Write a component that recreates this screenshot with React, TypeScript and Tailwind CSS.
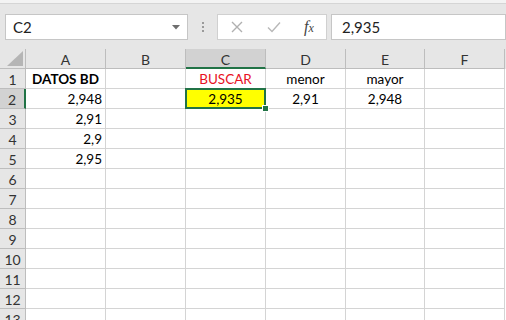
import React from 'react';

const cols = ['A', 'B', 'C', 'D', 'E', 'F'];
const widths = ['w-[80px]', 'w-[80px]', 'w-[80px]', 'w-[80px]', 'w-[79px]', 'w-[80px]'];

type Cell = { text: string; align?: 'left' | 'center' | 'right'; bold?: boolean; red?: boolean };

const data: Record<string, Cell> = {
  A1: { text: 'DATOS BD', align: 'center', bold: true },
  C1: { text: 'BUSCAR', align: 'center', red: true },
  D1: { text: 'menor', align: 'center' },
  E1: { text: 'mayor', align: 'center' },
  A2: { text: '2,948', align: 'right' },
  C2: { text: '2,935', align: 'center' },
  D2: { text: '2,91', align: 'center' },
  E2: { text: '2,948', align: 'center' },
  A3: { text: '2,91', align: 'right' },
  A4: { text: '2,9', align: 'right' },
  A5: { text: '2,95', align: 'right' },
};

const rows = Array.from({ length: 13 }, (_, i) => i + 1);

const App: React.FC = () => {
  return (
    <div className="w-[506px] h-[320px] overflow-hidden bg-white text-[13.5px] text-black" style={{ fontFamily: 'Lato, "Liberation Sans", sans-serif' }}>
      {/* ribbon remnant */}
      <div className="h-[4px] bg-[#f3f3f3] border-b border-[#d5d5d5]" />

      {/* formula bar */}
      <div className="h-[45px] bg-[#e6e6e6] flex items-start pt-[10px]">
        <div className="ml-[5px] w-[183px] h-[26px] bg-white border border-[#c6c6c6] flex items-center pl-[7px] pr-[7px] text-[15px] text-[#222]">
          <span className="flex-1 pt-[1px]">C2</span>
          <svg width="8" height="5" viewBox="0 0 8 5"><path d="M0 0h8L4 4.5z" fill="#6e6e6e" /></svg>
        </div>
        <div className="w-[29px] h-[26px] flex flex-col items-center justify-center gap-[2px]">
          <span className="w-[2px] h-[2px] bg-[#9a9a9a]" />
          <span className="w-[2px] h-[2px] bg-[#9a9a9a]" />
          <span className="w-[2px] h-[2px] bg-[#9a9a9a]" />
        </div>
        <div className="w-[110px] h-[26px] bg-white border border-[#d0d0d0] flex items-center">
          <div className="w-[38px] flex justify-center">
            <svg width="12" height="12" viewBox="0 0 12 12"><path d="M1 1l10 10M11 1L1 11" stroke="#b0b0b0" strokeWidth="1.4" /></svg>
          </div>
          <div className="w-[36px] flex justify-center">
            <svg width="14" height="12" viewBox="0 0 14 12"><path d="M1 6.5l4 4L13 1.5" stroke="#b8b8b8" strokeWidth="1.4" fill="none" /></svg>
          </div>
          <div className="w-[34px] flex justify-center text-[#444] italic text-[16px]" style={{ fontFamily: '"Liberation Serif", serif' }}>
            <span>f</span><span className="text-[12px] mt-[4px]">x</span>
          </div>
        </div>
        <div className="ml-[4px] flex-1 h-[26px] bg-white border border-[#c6c6c6] flex items-center pl-[10px] pt-[1px] text-[15px] text-[#222]">
          2,935
        </div>
      </div>

      {/* grid */}
      <div className="flex flex-col">
        <div className="flex h-[20px] bg-[#e6e6e6]">
          <div className="w-[26px] h-full border-r border-b border-[#bdbdbd] flex items-end justify-end pr-[2px] pb-[2px]">
            <svg width="16" height="15" viewBox="0 0 16 15"><path d="M16 0V15H0z" fill="#b5b5b5" /></svg>
          </div>
          {cols.map((c, i) => (
            <div
              key={c}
              className={`${widths[i]} h-full border-r border-[#bdbdbd] flex items-center justify-center pt-[2px] text-[14px] text-[#333] ${c === 'C' ? 'bg-[#d2d2d2] border-b-2 border-b-[#217346]' : 'border-b border-b-[#bdbdbd]'}`}
            >
              {c}
            </div>
          ))}
        </div>
        {rows.map((r) => (
          <div key={r} className="flex h-[20px]">
            <div
              className={`w-[26px] h-full border-b border-[#bdbdbd] flex items-center justify-center pt-[2px] text-[14px] text-[#333] ${r === 2 ? 'bg-[#d2d2d2] border-r-2 border-r-[#217346]' : 'bg-[#e6e6e6] border-r border-r-[#bdbdbd]'}`}
            >
              {r}
            </div>
            {cols.map((c, i) => {
              const cell = data[`${c}${r}`];
              const selected = c === 'C' && r === 2;
              return (
                <div
                  key={c}
                  className={`${widths[i]} h-full relative border-r border-b border-[#d4d4d4] flex items-center px-[3px] pt-[2px] ${selected ? 'bg-[#ffff00] z-10' : ''} ${cell?.align === 'right' ? 'justify-end' : cell?.align === 'center' ? 'justify-center' : 'justify-start'}`}
                >
                  {cell && (
                    <span className={`${cell.bold ? 'font-bold' : ''} ${cell.red ? 'text-[#e81123]' : 'text-black'}`}>{cell.text}</span>
                  )}
                  {selected && (
                    <>
                      <div className="absolute -left-px -top-px right-[-1px] bottom-[-1px] border-2 border-[#217346]" />
                      <div className="absolute right-[-4px] bottom-[-4px] w-[7px] h-[7px] bg-[#217346] border border-white" />
                    </>
                  )}
                </div>
              );
            })}
          </div>
        ))}
      </div>
    </div>
  );
};

export default App;
